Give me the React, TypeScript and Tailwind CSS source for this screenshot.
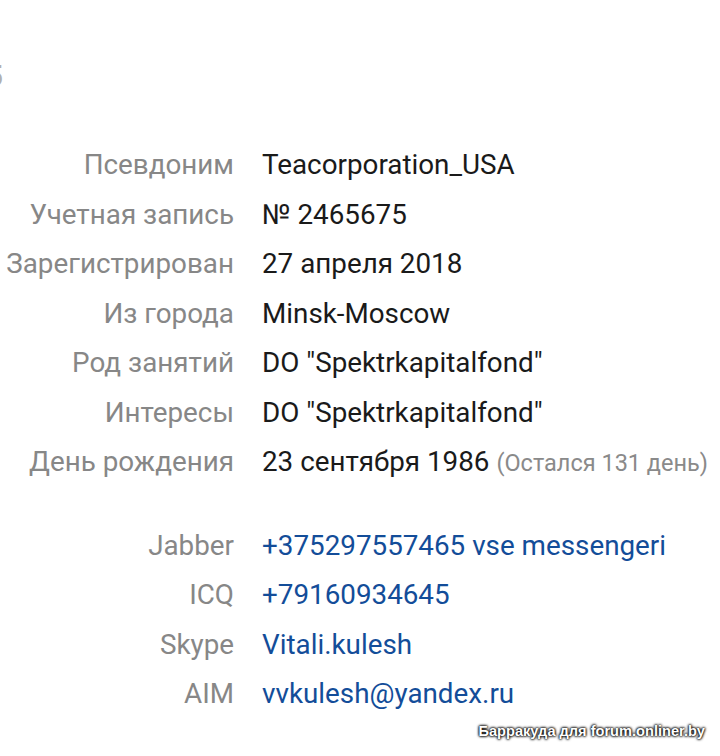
import React from "react";

type Row = { label: string; value: React.ReactNode; link?: boolean };

const mainRows: Row[] = [
  { label: "Псевдоним", value: "Teacorporation_USA" },
  { label: "Учетная запись", value: "№ 2465675" },
  { label: "Зарегистрирован", value: "27 апреля 2018" },
  { label: "Из города", value: "Minsk-Moscow" },
  { label: "Род занятий", value: 'DO "Spektrkapitalfond"' },
  { label: "Интересы", value: 'DO "Spektrkapitalfond"' },
  {
    label: "День рождения",
    value: (
      <>
        23 сентября 1986{" "}
        <span className="text-[23.5px] text-[#8a8a8a]">(Остался 131 день)</span>
      </>
    ),
  },
];

const contactRows: Row[] = [
  { label: "Jabber", value: "+375297557465 vse messengeri", link: true },
  { label: "ICQ", value: "+79160934645", link: true },
  { label: "Skype", value: "Vitali.kulesh", link: true },
  { label: "AIM", value: "vvkulesh@yandex.ru", link: true },
];

const InfoRow = ({ label, value, link }: Row) => (
  <div className="flex items-baseline h-[49.5px]">
    <div className="w-[234px] shrink-0 text-right text-[#878787] whitespace-nowrap">{label}</div>
    <div className={`pl-[28px] whitespace-nowrap ${link ? "text-[#134d99]" : "text-[#1a1a1a]"}`}>
      {value}
    </div>
  </div>
);

export default function App() {
  return (
    <div
      className="relative w-[720px] h-[756px] overflow-hidden bg-white text-[27.8px] leading-[32px]"
      style={{ fontFamily: "Roboto, 'Noto Sans', sans-serif" }}
    >
      {/* cut-off heading at the top left */}
      <div className="h-[149px] pt-[60px]">
        <div className="ml-[-14px] text-[30px] font-medium text-[#b0b0b0]">5</div>
      </div>

      <div className="flex flex-col">
        {mainRows.map((r) => (
          <InfoRow key={r.label} {...r} />
        ))}
      </div>

      <div className="mt-[34px] flex flex-col">
        {contactRows.map((r) => (
          <InfoRow key={r.label} {...r} />
        ))}
      </div>

      {/* watermark */}
      <div
        className="absolute right-[15px] bottom-[9px] text-[14.6px] font-bold text-white"
        style={{
          fontFamily: "'Liberation Sans', Arial, sans-serif",
          textShadow: "0 0 3px #000, 0 0 3px #000, 0 0 2px #000",
        }}
      >
        Барракуда для forum.onliner.by
      </div>
    </div>
  );
}
